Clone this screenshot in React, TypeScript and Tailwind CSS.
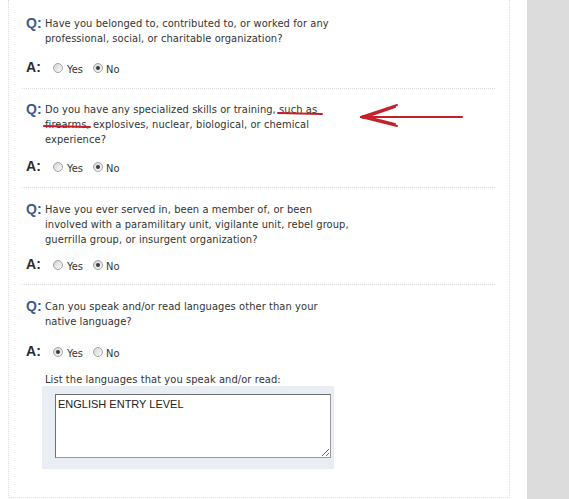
import React from "react";

const Radio = ({ checked }: { checked?: boolean }) => (
  <span className="relative inline-block h-[10px] w-[10px] shrink-0 rounded-full border border-[#a3a3a3] bg-gradient-to-br from-[#d4d4d4] to-[#fbfbfb]">
    {checked && (
      <span className="absolute left-[2px] top-[2px] h-[4px] w-[4px] rounded-full bg-[#3a3a3a]" />
    )}
  </span>
);

const Answer = ({ yes }: { yes?: boolean }) => (
  <div className="flex h-[14px] items-center pl-[17px] leading-none">
    <span className="-mt-[3px] w-[27px] font-['Liberation_Sans'] text-[14px] font-bold leading-none text-[#2a2a2a]">
      A:
    </span>
    <Radio checked={yes} />
    <span className="ml-[4px] mt-[3px] text-[11px] leading-none">Yes</span>
    <span className="ml-[10px] flex">
      <Radio checked={!yes} />
    </span>
    <span className="ml-[3px] mt-[3px] text-[11px] leading-none">No</span>
  </div>
);

const Question = ({ lines }: { lines: string[] }) => (
  <div className="flex pl-[17px]">
    <span className="w-[19px] shrink-0 font-['Liberation_Sans'] text-[14px] font-bold leading-[15px] text-[#3b5b8c] tracking-normal">
      Q:
    </span>
    <div className="text-[11px] leading-[15px]">
      {lines.map((l) => (
        <div key={l}>{l}</div>
      ))}
    </div>
  </div>
);

const Divider = () => (
  <div className="ml-[13px] w-[473px] border-t border-dotted border-[#dcdcd6]" />
);

export default function App() {
  return (
    <div className="relative flex h-[499px] w-[569px] overflow-hidden bg-white font-['DejaVu_Sans',sans-serif] text-[#333] tracking-[0.08px] [font-stretch:condensed]">
      <div className="w-[527px] shrink-0 pl-[8px]">
        <div className="h-[498px] w-[502px] border-x border-b border-dotted border-[#ddddd5] pt-[16px]">
          <Question lines={["Have you belonged to, contributed to, or worked for any", "professional, social, or charitable organization?"]} />
          <div className="mt-[15px]">
            <Answer />
          </div>
          <div className="mt-[13px]">
            <Divider />
          </div>

          <div className="mt-[13px]">
            <Question
              lines={[
                "Do you have any specialized skills or training, such as",
                "firearms, explosives, nuclear, biological, or chemical",
                "experience?",
              ]}
            />
          </div>
          <div className="mt-[13px]">
            <Answer />
          </div>
          <div className="mt-[13px]">
            <Divider />
          </div>

          <div className="mt-[14px]">
            <Question
              lines={[
                "Have you ever served in, been a member of, or been",
                "involved with a paramilitary unit, vigilante unit, rebel group,",
                "guerrilla group, or insurgent organization?",
              ]}
            />
          </div>
          <div className="mt-[11px]">
            <Answer />
          </div>
          <div className="mt-[12px]">
            <Divider />
          </div>

          <div className="mt-[14px]">
            <Question lines={["Can you speak and/or read languages other than your", "native language?"]} />
          </div>
          <div className="mt-[16px]">
            <Answer yes />
          </div>

          <div className="mt-[14px] pl-[36px] text-[11px] leading-[13px]">
            List the languages that you speak and/or read:
          </div>
          <div className="ml-[33px] w-[292px] bg-[#e8eef4] pb-[11px] pl-[13px] pt-[8px]">
            <textarea
              readOnly
              defaultValue="ENGLISH ENTRY LEVEL"
              className="block h-[64px] w-[276px] resize border border-[#6f6f6f] border-b-[#9a9a9a] border-r-[#9a9a9a] bg-white px-[2px] py-[2px] font-['Liberation_Sans',sans-serif] text-[11px] leading-[14px] tracking-normal text-[#222] [font-stretch:normal] outline-none"
            />
          </div>
        </div>
      </div>
      <div className="flex-1 bg-[#dcdcdc]" />

      <svg className="pointer-events-none absolute left-0 top-0" width="569" height="499">
        <g stroke="#c3202a" strokeWidth="2" fill="none" strokeLinecap="round">
          <path d="M278 113 L322 114" />
          <path d="M44 126 L90 127" />
          <path d="M361 117 L462 117" />
          <path d="M361 117 L397 105" />
          <path d="M363 118 L395 107" />
          <path d="M361 117 L397 126" />
          <path d="M363 116 L395 124" />
        </g>
      </svg>
    </div>
  );
}
